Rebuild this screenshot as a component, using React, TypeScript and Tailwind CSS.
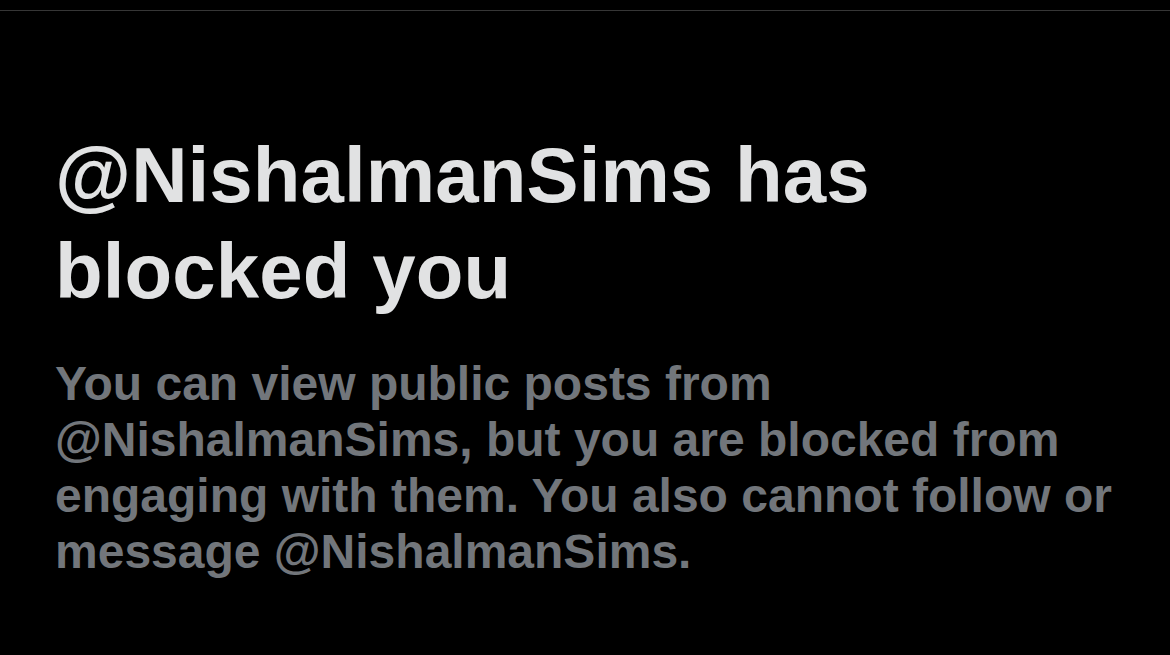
import React from 'react';

const App: React.FC = () => {
  return (
    <div className="min-h-screen w-full bg-black overflow-hidden" style={{ fontFamily: '"Liberation Sans", Arial, sans-serif' }}>
      <div className="h-[10px]" />
      <div className="border-t border-[#363636]" />
      <main className="pl-[55px] pt-[116px]">
        {/* Heading */}
        <h1 className="text-[78px] leading-[96px] font-bold text-[#e1e2e3] tracking-[0.1px]">
          @NishalmanSims has
          <br />
          blocked you
        </h1>

        {/* Message */}
        <p className="mt-[37px] text-[48px] leading-[56px] font-bold text-[#72767b]">
          You can view public posts from
          <br />
          @NishalmanSims, but you are blocked from
          <br />
          engaging with them. You also cannot follow or
          <br />
          message @NishalmanSims.
        </p>
      </main>
    </div>
  );
};

export default App;
